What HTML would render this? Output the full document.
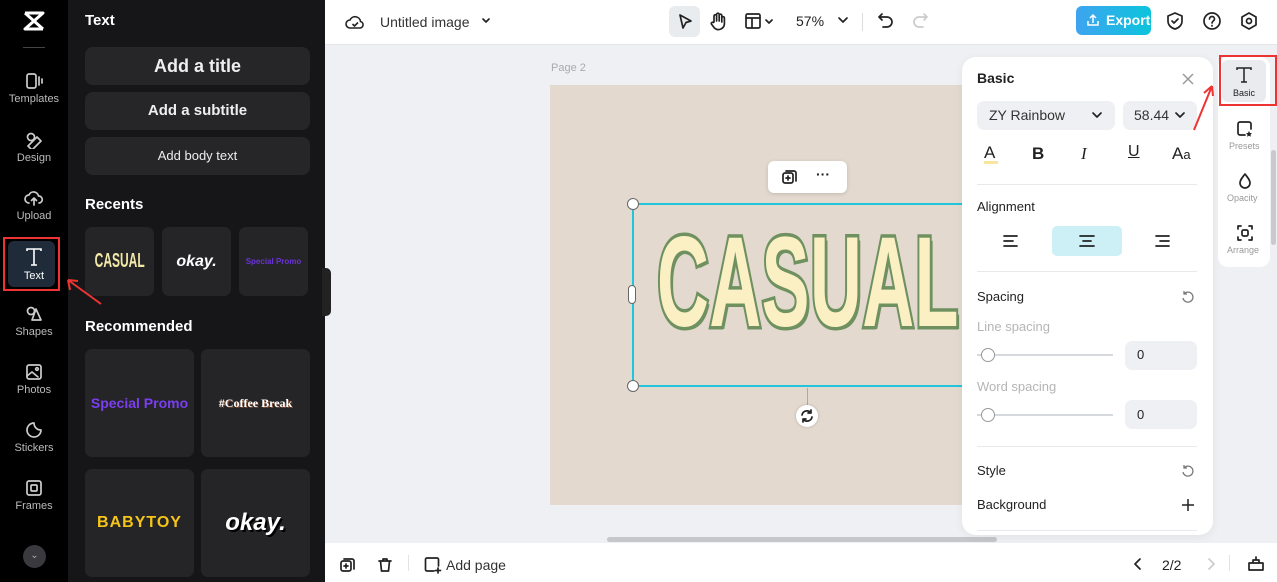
<!DOCTYPE html>
<html><head><meta charset="utf-8"><style>
*{box-sizing:border-box;margin:0;padding:0}
body{width:1277px;height:582px;overflow:hidden;position:relative;font-family:"Liberation Sans",sans-serif;background:#eef0f3}
.a{position:absolute}
.rail{left:0;top:0;width:68px;height:582px;background:#000}
.ri{position:absolute;left:0;width:68px;text-align:center;color:#bbb;font-size:11px}
.ri svg{display:block;margin:0 auto 3px}
.panel{left:68px;top:0;width:257px;height:582px;background:#161618;color:#fff}
.btn{position:absolute;left:17px;width:225px;background:#262629;border-radius:8px;text-align:center;font-weight:bold;color:#eee}
.card{position:absolute;background:#252528;border-radius:7px;display:flex;align-items:center;justify-content:center}
.h{position:absolute;left:17px;font-weight:bold;font-size:15px;color:#fff}
.top{left:325px;top:0;width:952px;height:44px;background:#fff}
.bot{left:325px;top:543px;width:952px;height:39px;background:#fff}
.ic{stroke:#222;fill:none;stroke-width:1.7;stroke-linecap:round;stroke-linejoin:round}
.lab{position:absolute;font-size:13px;color:#222}
.gray{color:#aaa}
.sp{position:absolute;left:977px;right:80px;height:1px;background:#e8e9ec}
</style></head><body>
<div class="a rail">
 <svg class="a" style="left:22px;top:10px" width="24" height="22" viewBox="0 0 24 22"><path d="M3 3h18L3 19h18M3 3l18 16" stroke="#fff" stroke-width="3" fill="none" stroke-linejoin="round"/></svg>
 <div class="a" style="left:23px;top:47px;width:22px;height:1px;background:#444"></div>
 <div class="ri" style="top:72px"><svg width="20" height="18" viewBox="0 0 20 18" class="ic" style="stroke:#ccc"><rect x="3" y="2" width="9" height="14" rx="2"/><path d="M15 5v8M18 7v4"/></svg>Templates</div>
 <div class="ri" style="top:131px"><svg width="20" height="18" viewBox="0 0 20 18" class="ic" style="stroke:#ccc"><circle cx="7" cy="6" r="3.5"/><path d="M4 15l9-9 4 4-9 9z"/></svg>Design</div>
 <div class="ri" style="top:189px"><svg width="20" height="18" viewBox="0 0 20 18" class="ic" style="stroke:#ccc"><path d="M5 14a4 4 0 010-8 5 5 0 019.5 1A3.5 3.5 0 0115 14M10 9v7M7.5 11.5L10 9l2.5 2.5"/></svg>Upload</div>
 <div class="a" style="left:3px;top:237px;width:57px;height:54px;border:2px solid #e33;"></div>
 <div class="a" style="left:8px;top:241px;width:47px;height:46px;background:#1f2b38;border-radius:6px"></div>
 <div class="ri" style="top:247px;color:#fff"><svg width="20" height="20" viewBox="0 0 20 20"><path d="M3 4V2h14v2M10 2v16M7 18h6" stroke="#fff" stroke-width="1.6" fill="none"/></svg>Text</div>
 <div class="ri" style="top:305px"><svg width="20" height="18" viewBox="0 0 20 18" class="ic" style="stroke:#ccc"><circle cx="7" cy="6" r="3.5"/><path d="M12 4l5 11H8z"/></svg>Shapes</div>
 <div class="ri" style="top:363px"><svg width="20" height="18" viewBox="0 0 20 18" class="ic" style="stroke:#ccc"><rect x="3" y="2" width="14" height="14" rx="2"/><path d="M3 13l5-4 6 5"/><circle cx="13" cy="6" r="1.3"/></svg>Photos</div>
 <div class="ri" style="top:421px"><svg width="20" height="18" viewBox="0 0 20 18" class="ic" style="stroke:#ccc"><path d="M17 9a7 7 0 11-7-7c0 4 3 7 7 7z"/></svg>Stickers</div>
 <div class="ri" style="top:479px"><svg width="20" height="18" viewBox="0 0 20 18" class="ic" style="stroke:#ccc"><rect x="3" y="2" width="14" height="14" rx="2"/><rect x="7" y="6" width="6" height="6" rx="1"/></svg>Frames</div>
 <div class="a" style="left:23px;top:545px;width:23px;height:23px;border-radius:50%;background:#3a3a3e;color:#aaa;font-size:10px;text-align:center;line-height:22px">⌄</div>
</div>
<div class="a panel">
 <div class="h" style="top:12px">Text</div>
 <div class="btn" style="top:47px;height:38px;line-height:38px;font-size:18px">Add a title</div>
 <div class="btn" style="top:92px;height:38px;line-height:38px;font-size:15px">Add a subtitle</div>
 <div class="btn" style="top:137px;height:38px;line-height:38px;font-size:13px;font-weight:normal">Add body text</div>
 <div class="h" style="top:196px">Recents</div>
 <div class="card" style="left:17px;top:227px;width:69px;height:69px;color:#f2e8a8;font-weight:bold;font-size:20px"><span style="display:inline-block;transform:scaleX(.6)">CASUAL</span></div>
 <div class="card" style="left:94px;top:227px;width:69px;height:69px;color:#fff;font-weight:bold;font-style:italic;font-size:16px">okay.</div>
 <div class="card" style="left:171px;top:227px;width:69px;height:69px;color:#6a33d6;font-size:8px;font-weight:bold">Special Promo</div>
 <div class="h" style="top:318px">Recommended</div>
 <div class="card" style="left:17px;top:349px;width:109px;height:108px;color:#7a3ef0;font-size:14px;font-weight:bold">Special Promo</div>
 <div class="card" style="left:133px;top:349px;width:109px;height:108px;color:#fff;font-size:12px;font-weight:bold;font-family:'Liberation Serif',serif;text-shadow:1px 1px 0 #7a4a30">#Coffee Break</div>
 <div class="card" style="left:17px;top:469px;width:109px;height:108px;color:#f5c518;font-size:16px;font-weight:bold;letter-spacing:1px">BABYTOY</div>
 <div class="card" style="left:133px;top:469px;width:109px;height:108px;color:#fff;font-size:24px;font-weight:bold;font-style:italic;text-shadow:2px 2px 0 #000">okay.</div>
</div>
<div class="a" style="left:322px;top:268px;width:9px;height:48px;background:#222;border-radius:0 5px 5px 0"></div>
<svg class="a" style="left:56px;top:268px" width="50" height="40"><path d="M45 36L12 12M12 12l2 10M12 12l10 1" stroke="#e33" stroke-width="2" fill="none"/></svg>

<div class="a top">
 <svg class="a" style="left:20px;top:12px" width="20" height="20" viewBox="0 0 20 20"><path d="M5 16a4 4 0 010-8 5.5 5.5 0 0110.5 1.5A3.3 3.3 0 0115 16z" stroke="#222" stroke-width="1.6" fill="none"/><path d="M7.5 12l2 2 3.5-3.5" stroke="#222" stroke-width="1.6" fill="none"/></svg>
 <div class="lab" style="left:55px;top:14px;font-size:14px;color:#333">Untitled image</div>
 <svg class="a" style="left:156px;top:16px" width="10" height="10"><path d="M2 3l3 3 3-3" class="ic"/></svg>
 <div class="a" style="left:344px;top:6px;width:31px;height:31px;background:#e9ecef;border-radius:6px"></div>
 <svg class="a" style="left:350px;top:12px" width="20" height="20"><path d="M5 3l11 6-5 1.5L8 16z" class="ic"/></svg>
 <svg class="a" style="left:383px;top:11px" width="20" height="22"><path d="M6 11V5a1.3 1.3 0 012.6 0v5V3.5a1.3 1.3 0 012.6 0V10V4.5a1.3 1.3 0 012.6 0V11V7a1.3 1.3 0 012.6 0v6a6 6 0 01-10 4l-3-4a1.3 1.3 0 012-1.5z" class="ic" stroke-width="1.4"/></svg>
 <svg class="a" style="left:420px;top:13px" width="32" height="18"><rect x="1" y="1" width="14" height="14" rx="1.5" class="ic"/><path d="M1 5h14M7 5v10M21 7l3 3 3-3" class="ic" stroke-width="1.4"/></svg>
 <div class="lab" style="left:471px;top:13px;font-size:14px">57%</div>
 <svg class="a" style="left:512px;top:16px" width="12" height="10"><path d="M2 2l4 4 4-4" class="ic"/></svg>
 <div class="a" style="left:537px;top:13px;width:1px;height:18px;background:#ddd"></div>
 <svg class="a" style="left:552px;top:12px" width="18" height="18"><path d="M5 2L2 5l3 3M2 5h8a5 5 0 010 10H6" class="ic"/></svg>
 <svg class="a" style="left:586px;top:12px" width="18" height="18"><path d="M13 2l3 3-3 3M16 5H8a5 5 0 000 10h4" class="ic" style="stroke:#ccc"/></svg>
 <div class="a" style="left:751px;top:6px;width:75px;height:29px;border-radius:6px;background:linear-gradient(90deg,#3ea4f0,#0cc4dc);color:#fff;font-weight:bold;font-size:14px;line-height:29px;padding-left:30px">Export</div>
 <svg class="a" style="left:760px;top:12px" width="16" height="16"><path d="M5 6l3-3 3 3M8 3v8M3 9v4h10V9" stroke="#fff" stroke-width="1.5" fill="none"/></svg>
 <svg class="a" style="left:840px;top:11px" width="20" height="20"><path d="M10 2l7 3v5c0 4-3 7-7 8-4-1-7-4-7-8V5z M7 10l2 2 4-4" class="ic"/></svg>
 <svg class="a" style="left:877px;top:11px" width="20" height="20"><circle cx="10" cy="10" r="8" class="ic"/><path d="M7.5 8a2.5 2.5 0 115 0c0 2-2.5 2-2.5 4M10 14.5v.5" class="ic"/></svg>
 <svg class="a" style="left:914px;top:11px" width="20" height="20"><path d="M10 2l7 4v8l-7 4-7-4V6z" class="ic"/><circle cx="10" cy="10" r="2.5" class="ic"/></svg>
</div>
<div class="a" style="left:325px;top:44px;width:952px;height:1px;background:#e4e6ea"></div>

<div class="lab gray" style="left:551px;top:62px;font-size:11px">Page 2</div>
<div class="a" style="left:550px;top:85px;width:420px;height:420px;background:#e3d9cf"></div>
<div class="a" style="left:768px;top:161px;width:79px;height:32px;background:#fff;border-radius:6px;box-shadow:0 1px 4px rgba(0,0,0,.15)"></div>
<svg class="a" style="left:781px;top:168px" width="18" height="18"><rect x="2" y="5" width="10" height="10" rx="2" class="ic" stroke-width="1.5"/><path d="M5 3h8a2 2 0 012 2v8M7 8v4M5 10h4" class="ic" stroke-width="1.5"/></svg>
<div class="lab" style="left:816px;top:166px;font-weight:bold;font-size:14px">···</div>
<div class="a" style="left:632px;top:203px;width:340px;height:184px;border:2px solid #22c5dc;border-right:none"></div>
<div class="a" style="left:657px;top:219px;font-size:128px;line-height:128px;font-weight:bold;color:#faf0c4;-webkit-text-stroke:7px #6f9160;paint-order:stroke fill;letter-spacing:1px;text-shadow:5px 3px 0 #6f9160;transform:scaleX(.56);transform-origin:top left;white-space:nowrap">CASUAL</div>
<div class="a" style="left:627px;top:198px;width:12px;height:12px;border-radius:50%;background:#fff;border:1px solid #666"></div>
<div class="a" style="left:627px;top:380px;width:12px;height:12px;border-radius:50%;background:#fff;border:1px solid #666"></div>
<div class="a" style="left:628px;top:285px;width:8px;height:19px;border-radius:4px;background:#fff;border:1px solid #666"></div>
<div class="a" style="left:807px;top:388px;width:1px;height:18px;background:#aaa"></div>
<div class="a" style="left:796px;top:405px;width:22px;height:22px;border-radius:50%;background:#fff;box-shadow:0 0 3px rgba(0,0,0,.2)"></div>
<svg class="a" style="left:800px;top:409px" width="14" height="14"><path d="M2 6a5 5 0 019-2M12 8a5 5 0 01-9 2M11 1v3H8M3 13v-3h3" class="ic" stroke-width="1.4"/></svg>
<div class="a" style="left:607px;top:537px;width:390px;height:5px;border-radius:3px;background:#c5c7cb"></div>
<div class="a" style="left:1271px;top:150px;width:5px;height:95px;border-radius:3px;background:#c8cacd"></div>

<div class="a" style="left:962px;top:57px;width:251px;height:478px;background:#fff;border-radius:14px;box-shadow:0 2px 10px rgba(0,0,0,.06)"></div>
<div class="lab" style="left:977px;top:70px;font-weight:bold;font-size:14px">Basic</div>
<svg class="a" style="left:1181px;top:72px" width="14" height="14"><path d="M2 2l10 10M12 2L2 12" stroke="#999" stroke-width="1.5"/></svg>
<div class="a" style="left:977px;top:101px;width:138px;height:29px;background:#eef0f3;border-radius:7px"></div>
<div class="lab" style="left:989px;top:107px;font-size:14px;color:#333">ZY Rainbow</div>
<svg class="a" style="left:1091px;top:111px" width="12" height="10"><path d="M2 2l4 4 4-4" class="ic" stroke-width="1.3"/></svg>
<div class="a" style="left:1123px;top:101px;width:74px;height:29px;background:#eef0f3;border-radius:7px"></div>
<div class="lab" style="left:1134px;top:107px;font-size:14px;color:#333">58.44</div>
<svg class="a" style="left:1174px;top:111px" width="12" height="10"><path d="M2 2l4 4 4-4" class="ic" stroke-width="1.3"/></svg>
<div class="lab" style="left:984px;top:143px;font-size:17px">A</div>
<div class="a" style="left:984px;top:161px;width:14px;height:3px;background:#f8e6a0"></div>
<div class="lab" style="left:1032px;top:144px;font-size:17px;font-weight:bold">B</div>
<div class="lab" style="left:1081px;top:144px;font-size:17px;font-style:italic;font-family:'Liberation Serif',serif">I</div>
<div class="lab" style="left:1128px;top:143px;font-size:16px;text-decoration:underline">U</div>
<div class="lab" style="left:1172px;top:144px;font-size:17px">A<span style="font-size:13px">a</span></div>
<div class="sp" style="top:184px"></div>
<div class="lab" style="left:977px;top:199px">Alignment</div>
<div class="a" style="left:1052px;top:226px;width:70px;height:30px;background:#cdf0f6;border-radius:5px"></div>
<svg class="a" style="left:1003px;top:234px" width="16" height="14"><path d="M1 2h13M1 7h9M1 12h13" class="ic" stroke-width="1.4"/></svg>
<svg class="a" style="left:1079px;top:234px" width="16" height="14"><path d="M1 2h14M4 7h8M1 12h14" class="ic" stroke-width="1.4"/></svg>
<svg class="a" style="left:1155px;top:234px" width="16" height="14"><path d="M1 2h13M5 7h9M1 12h13" class="ic" stroke-width="1.4"/></svg>
<div class="sp" style="top:271px"></div>
<div class="lab" style="left:977px;top:289px">Spacing</div>
<svg class="a" style="left:1181px;top:290px" width="14" height="14"><path d="M3 4a5 5 0 11-1 4M3 1v3h3" stroke="#777" stroke-width="1.3" fill="none"/></svg>
<div class="lab gray" style="left:977px;top:319px;color:#b5b5b5">Line spacing</div>
<div class="a" style="left:977px;top:354px;width:136px;height:2px;background:#d5d8dd"></div>
<div class="a" style="left:981px;top:348px;width:14px;height:14px;border-radius:50%;background:#fff;border:1px solid #999"></div>
<div class="a" style="left:1125px;top:341px;width:72px;height:29px;background:#eef0f3;border-radius:7px"></div>
<div class="lab" style="left:1137px;top:347px">0</div>
<div class="lab gray" style="left:977px;top:379px;color:#b5b5b5">Word spacing</div>
<div class="a" style="left:977px;top:414px;width:136px;height:2px;background:#d5d8dd"></div>
<div class="a" style="left:981px;top:408px;width:14px;height:14px;border-radius:50%;background:#fff;border:1px solid #999"></div>
<div class="a" style="left:1125px;top:400px;width:72px;height:29px;background:#eef0f3;border-radius:7px"></div>
<div class="lab" style="left:1137px;top:407px">0</div>
<div class="sp" style="top:446px"></div>
<div class="lab" style="left:977px;top:463px">Style</div>
<svg class="a" style="left:1181px;top:464px" width="14" height="14"><path d="M3 4a5 5 0 11-1 4M3 1v3h3" stroke="#777" stroke-width="1.3" fill="none"/></svg>
<div class="lab" style="left:977px;top:497px">Background</div>
<svg class="a" style="left:1181px;top:498px" width="14" height="14"><path d="M7 1v12M1 7h12" stroke="#222" stroke-width="1.5"/></svg>
<div class="sp" style="top:530px"></div>

<div class="a" style="left:1218px;top:57px;width:52px;height:210px;background:#fff;border-radius:10px"></div>
<div class="a" style="left:1222px;top:60px;width:44px;height:42px;background:#e9ebee;border-radius:6px"></div>
<div class="a" style="left:1219px;top:55px;width:58px;height:51px;border:2px solid #e33"></div>
<svg class="a" style="left:1235px;top:66px" width="18" height="18"><path d="M2 4V2h14v2M9 2v14M6 16h6" stroke="#222" stroke-width="1.5" fill="none"/></svg>
<div class="lab" style="left:1233px;top:88px;font-size:9px">Basic</div>
<svg class="a" style="left:1236px;top:120px" width="18" height="18"><path d="M9 15H4a2 2 0 01-2-2V4a2 2 0 012-2h9a2 2 0 012 2v5" class="ic" stroke-width="1.4"/><path d="M13 11l1 2 2 .3-1.5 1.4.4 2-1.9-1-1.9 1 .4-2-1.5-1.4 2-.3z" fill="#222"/></svg>
<div class="lab gray" style="left:1229px;top:141px;font-size:9px;color:#999">Presets</div>
<svg class="a" style="left:1236px;top:172px" width="18" height="18"><path d="M9 2c3 4 5 6 5 9a5 5 0 01-10 0c0-3 2-5 5-9z" class="ic" stroke-width="1.4"/></svg>
<div class="lab gray" style="left:1227px;top:193px;font-size:9px;color:#999">Opacity</div>
<svg class="a" style="left:1236px;top:224px" width="18" height="18"><path d="M2 5V2h3M13 2h3v3M16 13v3h-3M5 16H2v-3" class="ic" stroke-width="1.4"/><rect x="6" y="6" width="6" height="6" rx="1.5" class="ic" stroke-width="1.4"/></svg>
<div class="lab gray" style="left:1227px;top:245px;font-size:9px;color:#999">Arrange</div>
<svg class="a" style="left:1188px;top:80px" width="30" height="55"><path d="M6 50L24 6M24 6l-8 7M24 6l1 10" stroke="#e33" stroke-width="2" fill="none"/></svg>

<div class="a bot">
 <svg class="a" style="left:15px;top:14px" width="16" height="16"><rect x="1" y="4" width="10" height="10" rx="2" class="ic" stroke-width="1.4"/><path d="M4 2h8a2 2 0 012 2v8M6 7v4M4 9h4" class="ic" stroke-width="1.4"/></svg>
 <svg class="a" style="left:52px;top:14px" width="16" height="16"><path d="M2 4h12M6 4V2h4v2M3.5 4l1 10h7l1-10" class="ic" stroke-width="1.4"/></svg>
 <div class="a" style="left:83px;top:12px;width:1px;height:16px;background:#e3e3e3"></div>
 <svg class="a" style="left:99px;top:13px" width="18" height="18"><path d="M10 15H3a1.5 1.5 0 01-1.5-1.5v-10A1.5 1.5 0 013 2h10a1.5 1.5 0 011.5 1.5V10M14 12v5M11.5 14.5h5" class="ic" stroke-width="1.5"/></svg>
 <div class="lab" style="left:121px;top:14px;font-size:14px;color:#333">Add page</div>
 <svg class="a" style="left:807px;top:14px" width="12" height="14"><path d="M8 2L3 7l5 5" class="ic" stroke-width="1.6"/></svg>
 <div class="lab" style="left:837px;top:14px;font-size:14px">2/2</div>
 <svg class="a" style="left:880px;top:14px" width="12" height="14"><path d="M4 2l5 5-5 5" class="ic" stroke-width="1.4" style="stroke:#ccc"/></svg>
 <div class="a" style="left:904px;top:12px;width:1px;height:16px;background:#e3e3e3"></div>
 <svg class="a" style="left:922px;top:12px" width="18" height="18"><path d="M2 8h14v7H2zM6 8V5h6v3M9 2v3" class="ic" stroke-width="1.5"/></svg>
</div>
</body></html>
